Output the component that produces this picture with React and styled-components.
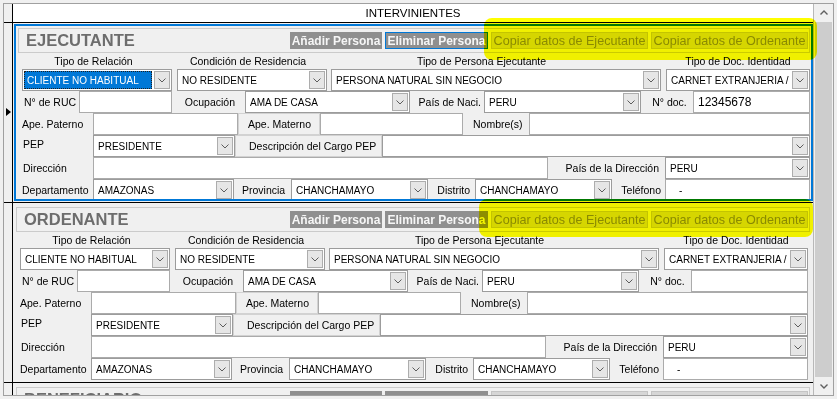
import React from 'react'
import styled, { createGlobalStyle, css } from 'styled-components'

const GlobalStyle = createGlobalStyle`
    html, body {
        margin: 0;
        padding: 0;
        background: #f0f0f0;
    }
    body {
        font-family: "Liberation Sans", Arial, sans-serif;
        color: #000;
    }
`

const Chevron = ({ up, color = '#5c5c5c', sw = 1 }) => (
    <svg width="8" height="5" viewBox="0 0 8 5">
        <path
            d={up ? 'M0.5 4.5 L4 1 L7.5 4.5' : 'M0.5 0.5 L4 4 L7.5 0.5'}
            fill="none"
            stroke={color}
            strokeWidth={sw}
        />
    </svg>
)

const ComboBox = ({ w, mr, value, selected }) => (
    <Combo $w={w} $mr={mr}>
        {selected
            ? <Selected>{value}</Selected>
            : <ComboText>{value}</ComboText>}
        <DropButton><Chevron /></DropButton>
    </Combo>
)

const Section = ({ title, focused, selected, doc }) => (
    <Cell $focused={focused}>
        <TitleBar>
            <Title>{title}</Title>
            <Buttons>
                <PersonButton $w={92}>Añadir Persona</PersonButton>
                <PersonButton $w={103} $active={focused}>Eliminar Persona</PersonButton>
                <CopyButton $w={157}>Copiar datos de Ejecutante</CopyButton>
                <CopyButton $w={157}>Copiar datos de Ordenante</CopyButton>
            </Buttons>
        </TitleBar>
        <Form>
            <HeadRow>
                <HeadLabel $w={150} $mr={5} $pr={7}>Tipo de Relación</HeadLabel>
                <HeadLabel $w={150} $mr={4} $pr={8}>Condición de Residencia</HeadLabel>
                <HeadLabel $w={330} $mr={5} $pr={29}>Tipo de Persona Ejecutante</HeadLabel>
                <HeadLabel $w={144}>Tipo de Doc. Identidad</HeadLabel>
            </HeadRow>
            <FieldRow>
                <ComboBox w={150} mr={5} value="CLIENTE NO HABITUAL" selected={selected} />
                <ComboBox w={150} mr={4} value="NO RESIDENTE" />
                <ComboBox w={330} mr={5} value="PERSONA NATURAL SIN NEGOCIO" />
                <ComboBox w={144} value="CARNET EXTRANJERIA /" />
            </FieldRow>
            <FieldRow>
                <Label $w={57} $pl={2}>N° de RUC</Label>
                <Input $w={93} />
                <Label $w={73} $align="right" $pr={10}>Ocupación</Label>
                <ComboBox w={165} value="AMA DE CASA" />
                <Label $w={74} $align="right" $pr={3}>País de Naci.</Label>
                <ComboBox w={157} value="PERU" />
                <Label $w={52} $align="center" $pl={5}>N° doc.</Label>
                <Input $w={117} $big>{doc}</Input>
            </FieldRow>
            <FieldRow>
                <Label $w={71}>Ape. Paterno</Label>
                <Input $w={145} />
                <Label $w={82} $pl={9} $boxed>Ape. Materno</Label>
                <Input $w={143} />
                <Label $w={66} $pl={10}>Nombre(s)</Label>
                <Input $w={281} />
            </FieldRow>
            <FieldRow>
                <Label $w={71} $pl={1} $top>PEP</Label>
                <ComboBox w={142} value="PRESIDENTE" />
                <Label $w={147} $pl={13} $boxed>Descripción del Cargo PEP</Label>
                <ComboBox w={428} value="" />
            </FieldRow>
            <FieldRow>
                <Label $w={71} $pl={1}>Dirección</Label>
                <Input $w={455} />
                <Label $w={117} $align="right" $pr={6}>País de la Dirección</Label>
                <ComboBox w={145} value="PERU" />
            </FieldRow>
            <FieldRow>
                <Label $w={71}>Departamento</Label>
                <ComboBox w={141} value="AMAZONAS" />
                <Label $w={57} $pl={8}>Provincia</Label>
                <ComboBox w={137} value="CHANCHAMAYO" />
                <Label $w={47} $align="right" $pr={5}>Distrito</Label>
                <ComboBox w={137} value="CHANCHAMAYO" />
                <Label $w={53} $align="right" $pr={4}>Teléfono</Label>
                <Input $w={145} $pl={13}>-</Input>
            </FieldRow>
        </Form>
    </Cell>
)

const App = () => (
    <Window>
        <GlobalStyle />
        <Grid>
            <GridBody>
                <GridRow $h={18}>
                    <RowHead />
                    <HeaderCell>INTERVINIENTES</HeaderCell>
                </GridRow>
                <GridRow $h={179}>
                    <RowHead><RowArrow /></RowHead>
                    <Section title="EJECUTANTE" focused selected doc="12345678" />
                </GridRow>
                <GridRow $h={179}>
                    <RowHead />
                    <Section title="ORDENANTE" />
                </GridRow>
                <GridRow $h={179}>
                    <RowHead />
                    <Section title="BENEFICIARIO" />
                </GridRow>
            </GridBody>
            <Scrollbar>
                <ScrollArrow><Chevron up color="#606060" sw={1.4} /></ScrollArrow>
                <Track><Thumb /></Track>
                <ScrollArrow><Chevron color="#606060" sw={1.4} /></ScrollArrow>
            </Scrollbar>
        </Grid>
        <Highlight $x={484} $y={18} $w={333} $h={42} />
        <Highlight $x={479} $y={199} $w={334} $h={38} />
    </Window>
)

export default App

const Window = styled.div`
    position: relative;
    width: 837px;
    height: 399px;
    padding: 3px;
    box-sizing: border-box;
    background: #f0f0f0;
    overflow: hidden;
`

const Grid = styled.div`
    display: flex;
    width: 831px;
    height: 393px;
    box-sizing: border-box;
    border: 1px solid #a0a0a0;
    background: #f0f0f0;
`

const GridBody = styled.div`
    flex: 1;
    display: flex;
    flex-direction: column;
    overflow: hidden;
`

const GridRow = styled.div`
    display: flex;
    flex-shrink: 0;
    height: ${p => p.$h}px;
    border-bottom: 1px solid #000;
`

const RowHead = styled.div`
    width: 8px;
    flex-shrink: 0;
    border-right: 1px solid #000;
    background: #f0f0f0;
    display: flex;
    align-items: center;
    justify-content: center;
`

const RowArrow = styled.div`
    width: 0;
    height: 0;
    margin-left: 1px;
    margin-top: -2px;
    border-left: 5px solid #000;
    border-top: 4px solid transparent;
    border-bottom: 4px solid transparent;
`

const HeaderCell = styled.div`
    flex: 1;
    background: #fff;
    display: flex;
    align-items: center;
    justify-content: center;
    font-size: 11.5px;
`

const Cell = styled.div`
    flex: 1;
    position: relative;
    box-sizing: border-box;
    overflow: hidden;
    padding: ${p => p.$focused ? '5px 0 0 5px' : '4px 0 0 3px'};
    ${p => p.$focused && css`
        &::after {
            content: '';
            position: absolute;
            left: 1px;
            top: 1px;
            right: 0;
            bottom: 1px;
            border: 2px solid #0078d7;
            pointer-events: none;
        }
    `}
`

const TitleBar = styled.div`
    height: 25px;
    box-sizing: border-box;
    margin-right: 3px;
    border: 1px solid #cbcbcb;
    display: flex;
    align-items: center;
    padding: 0 1px 0 7px;
`

const Title = styled.div`
    font-size: 16.5px;
    font-weight: bold;
    color: #6d6d6d;
`

const Buttons = styled.div`
    margin-left: auto;
    display: flex;
    gap: 3px;
`

const PersonButton = styled.div`
    width: ${p => p.$w}px;
    height: 17px;
    box-sizing: border-box;
    background: #8f8f8f;
    color: #f6f6f6;
    border: 1px solid ${p => p.$active ? '#0078d7' : '#8f8f8f'};
    font-size: 12px;
    font-weight: bold;
    display: flex;
    align-items: center;
    justify-content: center;
    white-space: nowrap;
    overflow: hidden;
`

const CopyButton = styled(PersonButton)`
    background: #d6d6d6;
    color: #8a8a8a;
    border-color: #c4c4c4;
    font-weight: normal;
    font-size: 12.6px;
`

const Form = styled.div`
    width: 788px;
    margin-left: 4px;
`

const HeadRow = styled.div`
    display: flex;
    height: 16px;
    align-items: center;
    font-size: 10.5px;
`

const HeadLabel = styled.div`
    width: ${p => p.$w}px;
    margin-right: ${p => p.$mr || 0}px;
    padding-right: ${p => p.$pr || 0}px;
    box-sizing: border-box;
    text-align: center;
    white-space: nowrap;
`

const FieldRow = styled.div`
    display: flex;
    height: 22px;
`

const Label = styled.div`
    width: ${p => p.$w}px;
    flex-shrink: 0;
    box-sizing: border-box;
    display: flex;
    align-items: ${p => p.$top ? 'flex-start' : 'center'};
    justify-content: ${p => p.$align === 'right' ? 'flex-end' : p.$align === 'center' ? 'center' : 'flex-start'};
    padding: ${p => p.$top ? 3 : 0}px ${p => p.$pr || 0}px 0 ${p => p.$pl || 0}px;
    font-size: 10.5px;
    white-space: nowrap;
    border: ${p => p.$boxed ? '1px solid #d2d2d2' : 'none'};
`

const Input = styled.div`
    width: ${p => p.$w}px;
    flex-shrink: 0;
    box-sizing: border-box;
    background: #fff;
    border: 1px solid #ababab;
    display: flex;
    align-items: center;
    padding-left: ${p => p.$pl ?? 4}px;
    font-size: ${p => p.$big ? 12 : 10}px;
`

const Combo = styled.div`
    width: ${p => p.$w}px;
    margin-right: ${p => p.$mr || 0}px;
    flex-shrink: 0;
    height: 22px;
    box-sizing: border-box;
    background: #fff;
    border: 1px solid #9c9c9c;
    padding: 1px;
    display: flex;
    align-items: center;
`

const ComboText = styled.div`
    flex: 1;
    padding-left: 3px;
    font-size: 10px;
    white-space: nowrap;
    overflow: hidden;
`

const Selected = styled.div`
    flex: 1;
    align-self: stretch;
    margin-right: 2px;
    box-sizing: border-box;
    background: #0078d7;
    color: #fff;
    border: 1px dotted #202020;
    display: flex;
    align-items: center;
    padding-left: 2px;
    font-size: 10px;
    white-space: nowrap;
`

const DropButton = styled.div`
    width: 16px;
    height: 18px;
    flex-shrink: 0;
    box-sizing: border-box;
    background: #e6e6e6;
    border: 1px solid #adadad;
    display: flex;
    align-items: center;
    justify-content: center;
`

const Scrollbar = styled.div`
    width: 20px;
    flex-shrink: 0;
    box-sizing: border-box;
    border-left: 1px solid #b8b8b8;
    background: #f0f0f0;
    display: flex;
    flex-direction: column;
`

const ScrollArrow = styled.div`
    height: 17px;
    flex-shrink: 0;
    display: flex;
    align-items: center;
    justify-content: center;
`

const Track = styled.div`
    flex: 1;
    padding: 1px 1px 0;
`

const Thumb = styled.div`
    height: 355px;
    background: #cdcdcd;
`

const Highlight = styled.div`
    position: absolute;
    left: ${p => p.$x}px;
    top: ${p => p.$y}px;
    width: ${p => p.$w}px;
    height: ${p => p.$h}px;
    background: #ffff00;
    mix-blend-mode: multiply;
    border-radius: 8px;
    pointer-events: none;
`
